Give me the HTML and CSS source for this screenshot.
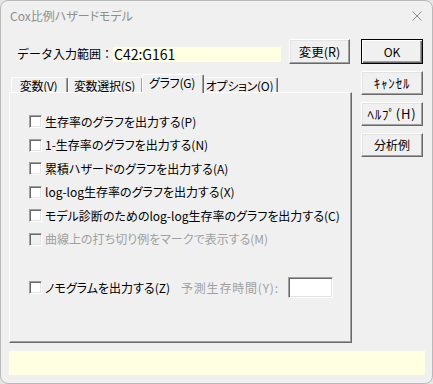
FILE: index.html
```html
<!DOCTYPE html>
<html lang="ja">
<head>
<meta charset="utf-8">
<title>Cox比例ハザードモデル</title>
<link rel="stylesheet" href="styles.css">
</head>
<body>
<div class="window">
  <div class="titlebar">
    <span class="title">Cox比例ハザードモデル</span>
    <svg class="close" viewBox="0 0 10 10" width="10" height="10"><path d="M0.5 0.5L9.5 9.5M9.5 0.5L0.5 9.5" stroke="#8f8f8f" stroke-width="1" fill="none"/></svg>
  </div>
  <div class="main">
    <div class="leftcol">
      <div class="rangerow">
        <span class="rangelabel">データ入力範囲：</span>
        <div class="rangefield">C42:G161</div>
        <div class="btn change">変更(R)</div>
      </div>
      <div class="tabs">
        <div class="tab t1">変数(V)</div>
        <div class="tab t2">変数選択(S)</div>
        <div class="tab t3 sel">グラフ(G)</div>
        <div class="tab t4">オプション(O)</div>
      </div>
      <div class="panel">
        <div class="chk"><span class="box"></span><span>生存率のグラフを出力する(P)</span></div>
        <div class="chk"><span class="box"></span><span>1-生存率のグラフを出力する(N)</span></div>
        <div class="chk"><span class="box"></span><span>累積ハザードのグラフを出力する(A)</span></div>
        <div class="chk"><span class="box"></span><span>log-log生存率のグラフを出力する(X)</span></div>
        <div class="chk"><span class="box"></span><span>モデル診断のためのlog-log生存率のグラフを出力する(C)</span></div>
        <div class="chk disabled"><span class="box"></span><span>曲線上の打ち切り例をマークで表示する(M)</span></div>
        <div class="chk nomo"><span class="box"></span><span class="nomolabel">ノモグラムを出力する(Z)</span><span class="predlabel">予測生存時間(Y):</span><span class="predinput"></span></div>
      </div>
    </div>
    <div class="rightcol">
      <div class="btn default">OK</div>
      <div class="btn hw">ｷｬﾝｾﾙ</div>
      <div class="btn hw">ﾍﾙﾌﾟ(H)</div>
      <div class="btn">分析例</div>
    </div>
  </div>
  <div class="status"></div>
</div>
</body>
</html>
```
FILE: styles.css
```css
* { box-sizing: border-box; }
html, body { margin: 0; padding: 0; }
body {
  width: 433px;
  height: 384px;
  overflow: hidden;
  background: #e6e6e6;
  font-family: "Noto Sans CJK JP", "Noto Sans", sans-serif;
  font-size: 12px;
  font-feature-settings: "palt";
  color: #000;
}
.window {
  width: 433px;
  height: 384px;
  background: #f0f0f0;
  border: 1px solid #b9b9b9;
  border-radius: 8px;
  display: flex;
  flex-direction: column;
}
.titlebar {
  height: 29px;
  display: flex;
  align-items: center;
  justify-content: space-between;
  padding: 0 10px 0 9px;
}
.title { color: #8e8e8e; font-size: 12px; line-height: 14px; }
.close { display: block; }
.main { display: flex; padding-left: 8px; }
.leftcol { width: 343px; display: flex; flex-direction: column; }
.rangerow {
  height: 25px;
  margin-top: 9px;
  display: flex;
  align-items: flex-end;
}
.rangelabel {
  margin-left: 8px;
  width: 96px;
  line-height: 15px;
  margin-bottom: 3px;
  font-size: 12px;
  font-feature-settings: normal;
  white-space: nowrap;
}
.rangefield {
  width: 168px;
  height: 15px;
  margin-bottom: 2px;
  background: #ffffe1;
  color: #000033;
  font-size: 14px;
  line-height: 15px;
  padding-left: 1px;
  font-feature-settings: normal;
}
.btn {
  height: 24px;
  display: flex;
  align-items: center;
  justify-content: center;
  background: #f0f0f0;
  border: 1px solid;
  border-color: #fff #696969 #696969 #fff;
  box-shadow: inset -1px -1px #a0a0a0, inset 1px 1px #e3e3e3;
  font-size: 12px;
  line-height: 14px;
  white-space: nowrap;
}
.hw { font-size: 13px; letter-spacing: 0.8px; }
.change { width: 61px; height: 25px; margin-left: 8px; align-self: stretch; font-size: 12.5px; }
.tabs {
  height: 18px;
  margin-top: 10px;
  display: flex;
  align-items: flex-end;
  padding-left: 2px;
}
.tab {
  height: 15px;
  border-top: 1px solid #fff;
  border-left: 1px solid #fff;
  border-right: 1px solid #696969;
  box-shadow: inset -1px 0 #a0a0a0;
  border-radius: 2px 2px 0 0;
  display: flex;
  align-items: center;
  justify-content: center;
  line-height: 13px;
  white-space: nowrap;
  letter-spacing: -0.3px;
  padding-right: 2px;
}
.t1 { width: 57px; }
.t2 { width: 75px; }
.t3 { width: 62px; }
.t4 { width: 75px; }
.tab.sel {
  height: 19px;
  margin: 0 -1px -1px;
  position: relative;
  z-index: 1;
  background: #f0f0f0;
  padding-bottom: 3px;
}
.panel {
  height: 251px;
  border-top: 1px solid #fff;
  border-left: 1px solid #fff;
  border-right: 1px solid #696969;
  border-bottom: 1px solid #696969;
  box-shadow: inset -1px -1px #a0a0a0;
  padding: 20.5px 0 0 19px;
  display: flex;
  flex-direction: column;
  gap: 7.5px;
}
.chk {
  height: 16px;
  display: flex;
  align-items: center;
  white-space: nowrap;
  line-height: 14px;
}
.box {
  width: 13px;
  height: 13px;
  flex: none;
  background: #fff;
  border: 1px solid;
  border-color: #a0a0a0 #fff #fff #a0a0a0;
  box-shadow: inset 1px 1px #696969, inset -1px -1px #e3e3e3;
  margin-right: 3px;
}
.disabled { color: #a0a0a0; }
.disabled .box { background: #f0f0f0; }
.nomo { margin-top: 25px; }
.nomolabel { width: 136px; }
.predlabel { width: 107px; color: #a0a0a0; letter-spacing: 0.8px; }
.predinput {
  width: 45px;
  height: 21px;
  flex: none;
  background: #fff;
  border: 1px solid;
  border-color: #a0a0a0 #fff #fff #a0a0a0;
  box-shadow: inset 1px 1px #696969, inset -1px -1px #e3e3e3;
}
.rightcol {
  width: 62px;
  margin-left: 9px;
  display: flex;
  flex-direction: column;
  gap: 7px;
  padding-top: 9px;
}
.default {
  height: 25px;
  border: 1px solid #000;
  box-shadow: inset 1px 1px #fff, inset -1px -1px #696969, inset -2px -2px #a0a0a0;
}
.status {
  height: 24px;
  margin: 8px 7px 0 8px;
  background: #ffffe1;
}
```
